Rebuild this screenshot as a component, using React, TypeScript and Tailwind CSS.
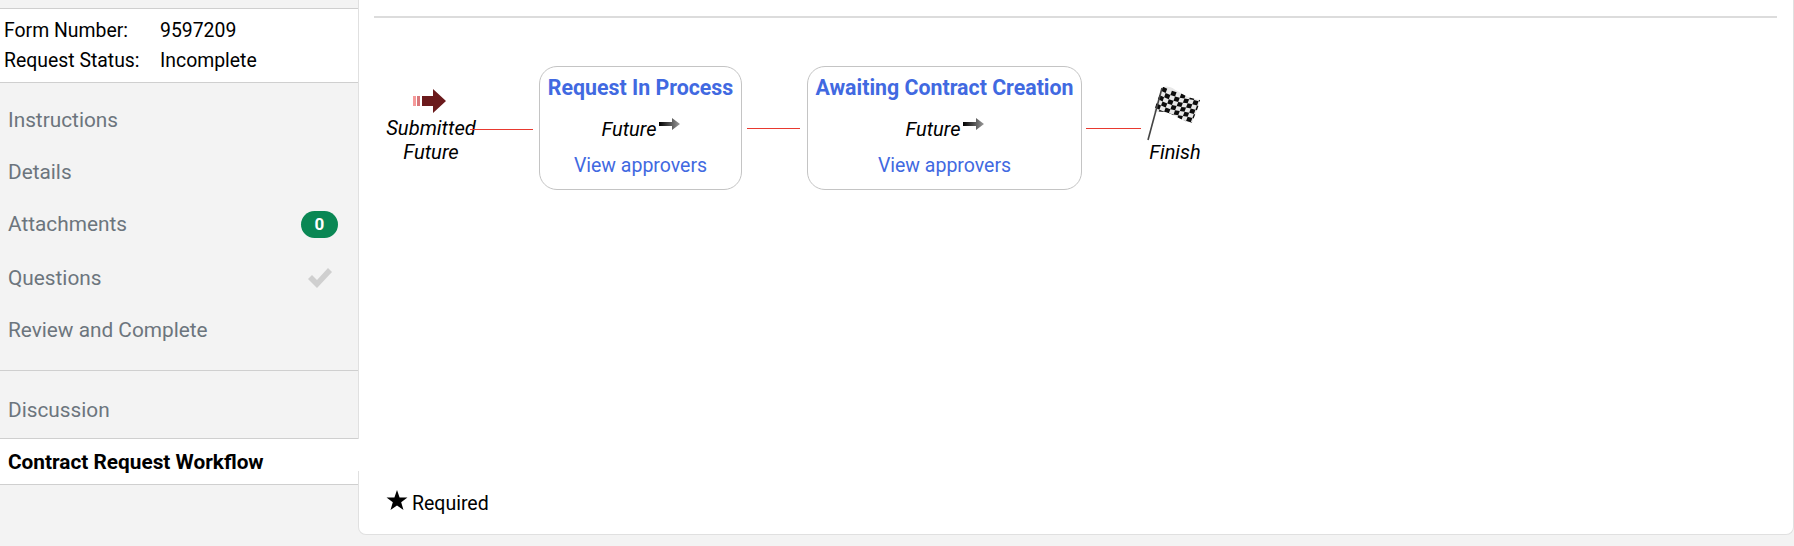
const font = { fontFamily: "Roboto, 'Noto Sans', sans-serif" };

function RedArrow() {
  return (
    <svg width="35" height="26" viewBox="0 0 35 26" className="block">
      <rect x="1" y="9" width="3" height="10" fill="#f59a9a" />
      <rect x="5" y="9" width="3" height="10" fill="#d9777a" />
      <path d="M10 9h11V2l13 12-13 12v-7H10z" fill="#6b1a1c" />
    </svg>
  );
}

function GreyArrow() {
  return (
    <svg width="22" height="14" viewBox="0 0 22 14" className="block blur-[0.3px]">
      <defs>
        <linearGradient id="ga" x1="0" x2="1" y1="0" y2="0">
          <stop offset="0" stopColor="#000" />
          <stop offset="1" stopColor="#9a9a9a" />
        </linearGradient>
      </defs>
      <path d="M0 5h13V1l8 6-8 6V9H0z" fill="url(#ga)" />
    </svg>
  );
}

function Flag() {
  const cells: React.ReactNode[] = [];
  const outline = "M16 1C22-1 27 3 32 6s9 6 21 8c-1 6-4 12-8 23-9-2-14-6-21-9-5-2-11-3-17-2C9 17 12 8 16 1z";
  const pt = (u: number, v: number) => {
    const wave = Math.sin(u / 1.7) * 1.4;
    return `${15.5 + u * 4.7 - v * 1.55},${wave + 0.5 + u * 1.5 + v * 4.2}`;
  };
  for (let r = 0; r < 8; r++) {
    for (let c = 0; c < 9; c++) {
      if ((r + c) % 2 === 0) {
        cells.push(
          <polygon key={`${r}-${c}`} points={`${pt(c, r)} ${pt(c + 1, r)} ${pt(c + 1, r + 1)} ${pt(c, r + 1)}`} fill="#0c0c0c" />
        );
      }
    }
  }
  return (
    <svg width="54" height="56" viewBox="0 0 54 56" className="block blur-[0.35px] -ml-[3px]">
      <clipPath id="fc">
        <path d={outline} />
      </clipPath>
      <path d={outline} fill="#e8e8e8" />
      <g clipPath="url(#fc)">{cells}</g>
      <path d="M15 2 1 54" stroke="#444" strokeWidth="1.6" fill="none" />
    </svg>
  );
}

function Stage({ title, width }: { title: string; width: string }) {
  return (
    <div className={`${width} h-[124px] shrink-0 rounded-[18px] border border-[#c4c4c4] flex flex-col items-center pt-[9px]`}>
      <div className="text-[21.33px] leading-[24px] font-bold text-[#4169e1] whitespace-nowrap">{title}</div>
      <div className="flex items-start mt-[17px] h-[24px] pl-[2px]">
        <span className="italic text-[20px] leading-[24px] text-black">Future</span>
        <span className="ml-[3px]"><GreyArrow /></span>
      </div>
      <div className="mt-[13px] text-[19.5px] leading-[24px] text-[#4169e1]">View approvers</div>
    </div>
  );
}

function NavItem({ label, className = "", right }: { label: string; className?: string; right?: React.ReactNode }) {
  return (
    <div className={`flex items-center justify-between pl-[8px] text-[20.8px] leading-[24px] text-[#6c757d] ${className}`}>
      <span>{label}</span>
      {right}
    </div>
  );
}

export default function App() {
  return (
    <div className="flex w-[1794px] h-[546px] bg-[#f3f3f3] overflow-hidden" style={font}>
      <aside className="w-[358px] shrink-0 pt-[8px]">
        <div className="h-[75px] bg-white border-y border-[#cfcfcf] pl-[4px] pt-[7px] text-[19.4px] leading-[30px] text-black">
          <div className="flex"><span className="w-[156px]">Form Number:</span><span>9597209</span></div>
          <div className="flex"><span className="w-[156px]">Request Status:</span><span>Incomplete</span></div>
        </div>
        <div className="pt-[25px]">
          <NavItem label="Instructions" className="h-[24px]" />
          <NavItem label="Details" className="h-[24px] mt-[28px]" />
          <NavItem
            label="Attachments"
            className="h-[24px] mt-[28px] pr-[20px]"
            right={<span className="w-[37px] h-[27px] rounded-full bg-[#0a8754] text-white font-bold text-[17px] leading-[27px] text-center">0</span>}
          />
          <NavItem
            label="Questions"
            className="h-[24px] mt-[30px] pr-[25px]"
            right={
              <svg width="26" height="22" viewBox="0 0 26 22">
                <path d="M1 12l4-4 5 5L21 1l4 4-15 16z" fill="#cfcfcf" />
              </svg>
            }
          />
          <NavItem label="Review and Complete" className="h-[24px] mt-[28px]" />
        </div>
        <div className="mt-[28px] border-t border-[#cfcfcf] pt-[27px]">
          <NavItem label="Discussion" className="h-[24px]" />
        </div>
        <div className="relative mt-[16px] h-[47px] bg-white border-y border-[#cfcfcf] pl-[8px] text-[20.8px] leading-[47px] font-bold text-black">
          Contract Request Workflow
          <span className="absolute left-full top-0 w-[2px] h-[32px] bg-white" />
        </div>
      </aside>
      <main className="flex-1 h-[535px] bg-white border-x border-b border-[#e0e0e0] rounded-br-[8px] rounded-bl-[8px] flex flex-col px-[15px] pt-[16px]">
        <div className="border-t-2 border-[#dcdcdc] mr-[1px] h-0" />
        <div className="flex items-start pt-[48px]">
          <div className="relative w-[165px] shrink-0 flex flex-col items-start">
            <div className="ml-[38px] mt-[21px]"><RedArrow /></div>
            <div className="w-[114px] mt-[3px] text-center italic text-[20.2px] leading-[24px] text-black">
              <div>Submitted</div>
              <div>Future</div>
            </div>
            <span className="absolute left-[96px] top-[63px] w-[63px] h-px bg-[#e8392f]" />
          </div>
          <Stage title="Request In Process" width="w-[203px]" />
          <div className="w-[65px] shrink-0 pt-[62px] pl-[5px]"><div className="h-px bg-[#e8392f] w-[53px]" /></div>
          <Stage title="Awaiting Contract Creation" width="w-[275px]" />
          <div className="w-[65px] shrink-0 pt-[62px] pl-[4px]"><div className="h-px bg-[#e8392f] w-[55px]" /></div>
          <div className="flex flex-col items-center w-[56px] shrink-0 pt-[20px]">
            <Flag />
            <div className="italic text-[20px] leading-[24px] text-black -mt-[2px]">Finish</div>
          </div>
        </div>
        <div className="mt-auto mb-[18px] ml-[12px] flex items-center text-[19.5px] leading-[24px] text-black">
          <svg width="22" height="22" viewBox="0 0 20 20" className="mr-[4px] -mt-[6px]">
            <path d="M10 0L12.35 6.76 19.5 6.9 13.8 11.2 15.9 18.1 10 14 4.1 18.1 6.2 11.2 .5 6.9 7.65 6.76z" fill="#000" />
          </svg>
          Required
        </div>
      </main>
    </div>
  );
}
